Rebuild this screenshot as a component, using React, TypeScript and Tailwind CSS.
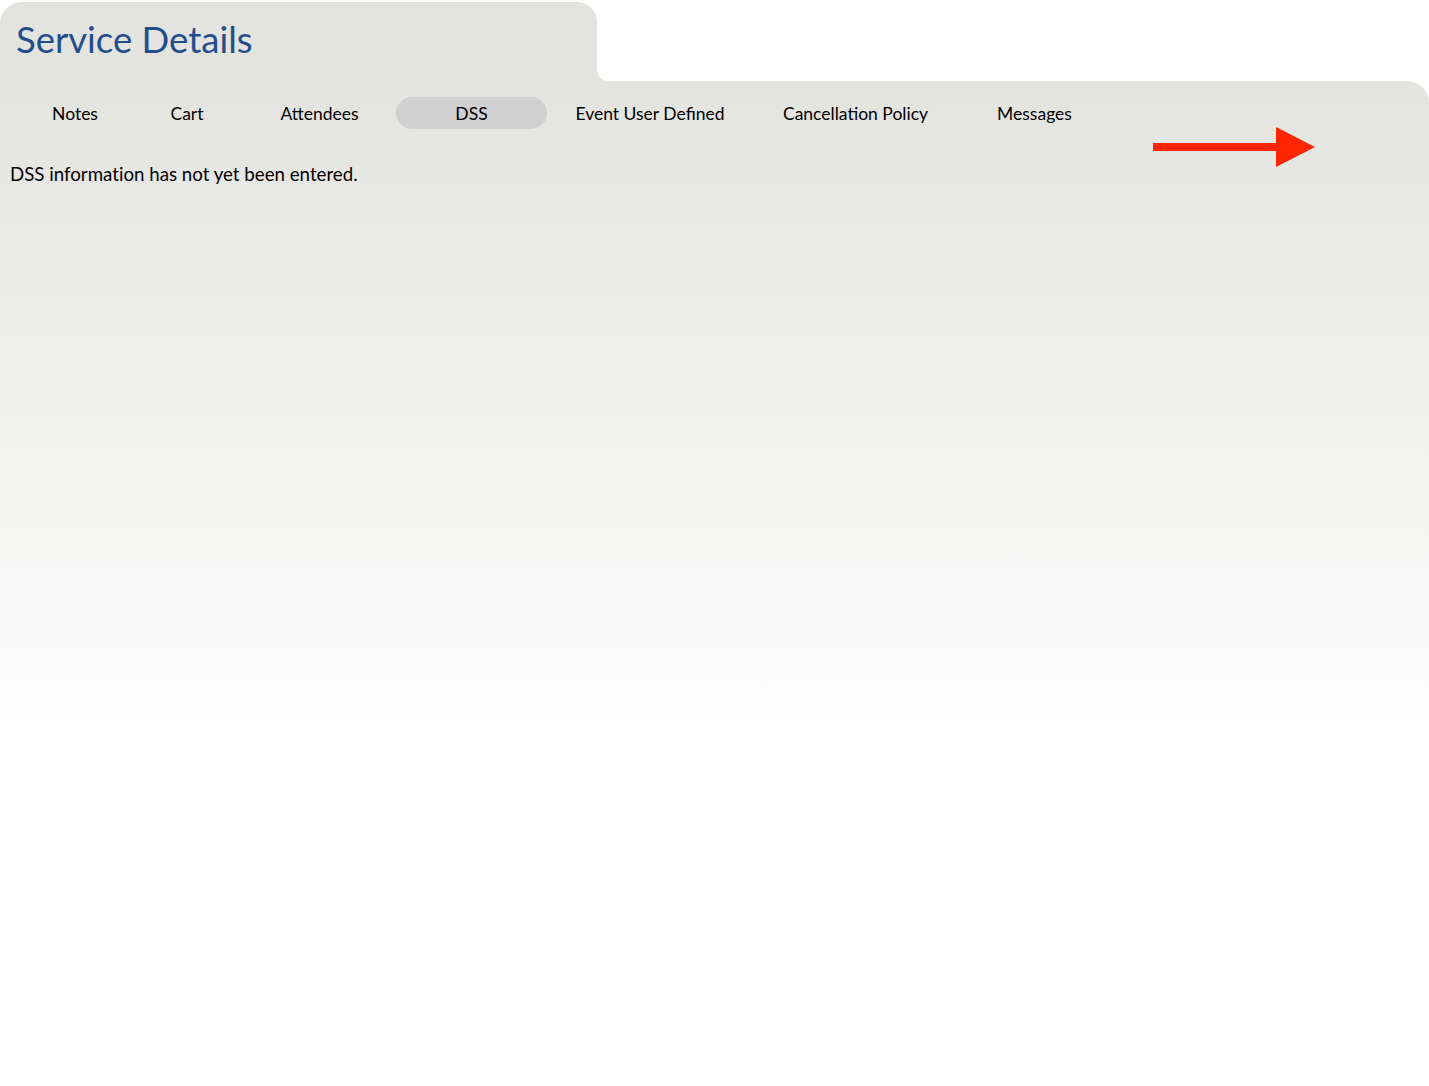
const tabs = [
  { label: "Notes", w: "w-[112px]" },
  { label: "Cart", w: "w-[112px]" },
  { label: "Attendees", w: "w-[153px]" },
  { label: "DSS", w: "w-[151px]", active: true },
  { label: "Event User Defined", w: "w-[206px]" },
  { label: "Cancellation Policy", w: "w-[205px]" },
  { label: "Messages", w: "w-[153px]" },
];

function Arrow() {
  return (
    <svg className="absolute left-[1153px] top-[127px]" width="163" height="40" viewBox="0 0 163 40">
      <rect x="0" y="16" width="125" height="8" fill="#ff2600" />
      <polygon points="123,0 162,20 123,40" fill="#ff2600" />
    </svg>
  );
}

export default function App() {
  return (
    <div className="relative min-h-screen bg-white pt-[2px] font-['Lato','Liberation_Sans',sans-serif]">
      {/* header row: title tab + white gap with inverse corner */}
      <div className="flex h-[79px]">
        <div className="w-[597px] rounded-tl-[22px] rounded-tr-[20px] bg-[#e3e3e0] pl-4 pt-[15px]">
          <h1 className="text-[36.5px] leading-[44px] text-[#234e8c]">Service Details</h1>
        </div>
        <div className="flex-1 bg-[#e3e3e0]">
          <div className="h-full rounded-bl-[12px] bg-white" />
        </div>
      </div>

      <div className="h-[665px] rounded-tr-[22px] bg-linear-to-b from-[#e3e3e0] to-white">
        <div className="flex pl-[19px] pt-4">
          {tabs.map((t) => (
            <div
              key={t.label}
              className={
                t.active
                  ? `${t.w} flex h-8 items-center justify-center rounded-full bg-[#d0d0d0] pt-[2px] text-[17.5px] text-black`
                  : `${t.w} flex h-8 items-center justify-center pt-[2px] text-[17.5px] text-black`
              }
            >
              {t.label}
            </div>
          ))}
        </div>
        <p className="mt-[31px] pl-[10px] text-[18.7px] text-black [font-variant-ligatures:no-common-ligatures]">
          DSS information has not yet been entered.
        </p>
      </div>

      <Arrow />
    </div>
  );
}
